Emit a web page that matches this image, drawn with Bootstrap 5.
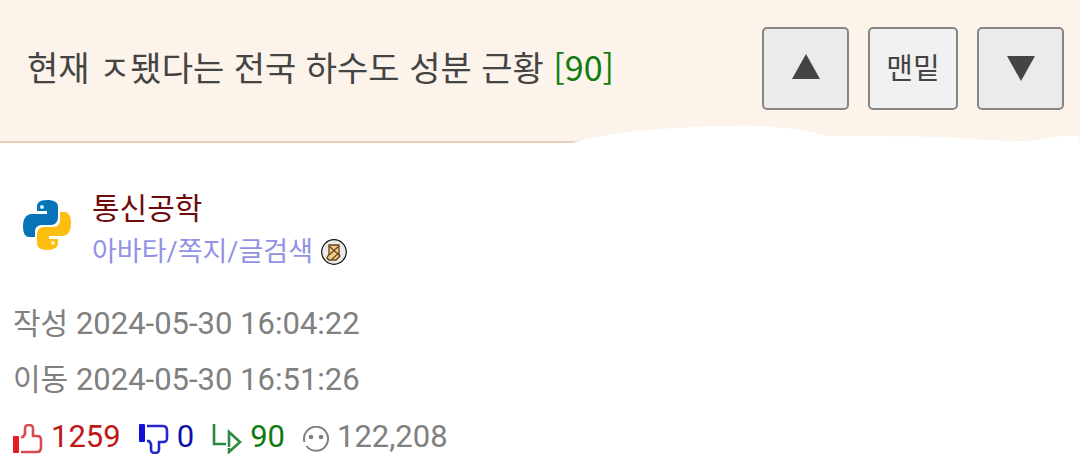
<!DOCTYPE html>
<html lang="ko">
<head>
<meta charset="utf-8">
<meta name="viewport" content="width=device-width, initial-scale=1">
<title>현재 ㅈ됐다는 전국 하수도 성분 근황</title>
<link href="https://cdn.jsdelivr.net/npm/bootstrap@5.3.0/dist/css/bootstrap.min.css" rel="stylesheet">
<style>
  body { font-family: Roboto, "Noto Sans CJK KR", sans-serif; color: #444; background: #fff; }
  .post-head { background: #fcf3ea; border-bottom: 2px solid #e8d0b8; padding: 27px 16px 31px 27px; }
  .post-title { font: 400 34px/52px "Noto Sans CJK KR", sans-serif; padding-bottom: 4px; }
  .reply-count { color: #107c10; text-decoration: none; }
  .btn-jump { --bs-btn-border-radius: 5px; --bs-btn-border-width: 2px; --bs-btn-border-color: #888682; --bs-btn-bg: #ebebeb; --bs-btn-color: #444; --bs-btn-hover-bg: #ddd; --bs-btn-hover-border-color: #777;
    width: 87px; height: 83px; padding: 0; font: 400 29px/40px "Noto Sans CJK KR", sans-serif; }
  .btn-jump svg { display: block; margin: 0 auto; }
  .btn-end { --bs-btn-bg: #f1f1f1; width: 90px; padding-bottom: 5px; }
  .jump-group { gap: 19px; }
  .paper-edge { right: 0; bottom: -2px; width: 47%; height: 18px; overflow: visible; }
  .author { padding: 44px 22px 0; gap: 20px; }
  .author-pic { margin-top: 12px; }
  .author-name { font-size: 30px; line-height: 44px; color: #6e0c0c; text-decoration: none; }
  .author-links { font-size: 27px; line-height: 42px; }
  .author-links a { color: #9292e4; text-decoration: none; }
  .meta { padding: 23px 13px 0; color: #808080; font-size: 31px; line-height: 56px; }
  .meta-label { font-size: 30px; }
  .stats { gap: 18px; padding-top: 1px; }
  .stat { gap: 8px; }
  .stat svg { margin-top: 3px; }
  .up { color: #c01818; }
  .down { color: #1010a8; }
  .reply { color: #107c10; }
</style>
</head>
<body>
<header class="post-head position-relative d-flex justify-content-between align-items-center">
  <h1 class="post-title mb-0">현재 ㅈ됐다는 전국 하수도 성분 근황 <a class="reply-count" href="#replies">[90]</a></h1>
  <div class="jump-group d-flex flex-shrink-0">
    <button type="button" class="btn btn-jump" aria-label="위로"><svg width="28" height="29" viewBox="0 0 28 29" aria-hidden="true"><path d="M14 0 28 25H0z" fill="#444"/></svg></button>
    <button type="button" class="btn btn-jump btn-end">맨밑</button>
    <button type="button" class="btn btn-jump" aria-label="아래로"><svg width="28" height="25" viewBox="0 0 28 25" aria-hidden="true"><path d="M0 0H28L14 25z" fill="#444"/></svg></button>
  </div>
  <svg class="paper-edge position-absolute" viewBox="0 0 512 18" preserveAspectRatio="none" aria-hidden="true"><path d="M0 18C18 13 38 9 62 6C95 4 120 1 158 1C200 0 228 3 257 11C320 11 370 11 405 14C425 16 445 16 460 16C475 15 480 11 497 11H512V18z" fill="#fff"/></svg>
</header>

<main>
  <section class="author d-flex align-items-start">
    <svg class="author-pic" width="50" height="52" viewBox="0 0 50 52" aria-hidden="true">
      <path d="M25 1C17 1 15 4 15 8V12H25V15H10C4 15 1 20 1 27C1 34 3 38 7 38H13V33C13 28 16 26 20 26H29C33 26 36 23 36 18V8C36 3 32 1 25 1z" fill="#0874b8"/>
      <path d="M38 13H43C47 13 49 18 49 24C49 32 46 37 40 37H27V40H36V44C36 49 31 51 25 51C18 51 15 48 15 44V35C15 31 18 28 22 28H31C36 28 38 25 38 20z" fill="#fdbf0f"/>
      <circle cx="20" cy="8" r="2" fill="#d8ecf7"/><circle cx="31" cy="44" r="2" fill="#fff0bd"/>
    </svg>
    <div>
      <div class="lh-1"><a class="author-name" href="#author">통신공학</a></div>
      <div class="author-links d-flex align-items-center gap-2">
        <span><a href="#avatar">아바타</a><a href="#note">/쪽지</a><a href="#search">/글검색</a></span>
        <svg width="26" height="26" viewBox="0 0 26 26" aria-hidden="true"><circle cx="13" cy="13" r="12.3" fill="#ebebeb" stroke="#111" stroke-width="1.2"/><path d="M8 6H18V15L19 17L15 21H8L6 19L8 15z" fill="#f5ca83" stroke="#60451f" stroke-width="1.3"/><path d="M8 7 18 16M18 7 8 16M11 20 18 14" fill="none" stroke="#60451f" stroke-width="1.2"/></svg>
      </div>
    </div>
  </section>

  <section class="meta">
    <div><span class="meta-label">작성</span> <time datetime="2024-05-30T16:04:22">2024-05-30 16:04:22</time></div>
    <div><span class="meta-label">이동</span> <time datetime="2024-05-30T16:51:26">2024-05-30 16:51:26</time></div>
    <div class="stats d-flex align-items-center">
      <span class="stat up d-flex align-items-center">
        <svg width="30" height="30" viewBox="0 0 30 30" aria-hidden="true"><path d="M1 13H5V28H1z" fill="#e61c24" stroke="#e61c24" stroke-width="2" stroke-linejoin="round"/><path d="M8 28H24C27 28 28 26 28 23V16C28 13 27 12 24 12H20V5C20 2 19 1 16 1S12 2 12 5V10L10 13H8" fill="none" stroke="#d94b50" stroke-width="2.6"/></svg>1259</span>
      <span class="stat down d-flex align-items-center">
        <svg width="30" height="30" viewBox="0 0 30 30" aria-hidden="true"><path d="M1 1H5V17H1z" fill="#1010dc" stroke="#1010dc" stroke-width="2" stroke-linejoin="round"/><path d="M8 2H24C27 2 28 4 28 7V14C28 17 27 18 24 18H20V25C20 28 19 29 16 29S12 28 12 25V20L10 17H8" fill="none" stroke="#2525cf" stroke-width="2.6"/></svg>0</span>
      <span class="stat reply d-flex align-items-center">
        <svg width="30" height="30" viewBox="0 0 30 30" aria-hidden="true"><path d="M2 0V20H14M17 23V8L28 18L17 28V24" fill="none" stroke="#2c8a40" stroke-width="2.6"/></svg>90</span>
      <span class="stat d-flex align-items-center">
        <svg width="26" height="26" viewBox="0 0 26 26" aria-hidden="true"><path d="M1.5 16A12 12 0 1 1 3.5 20" fill="none" stroke="#808080" stroke-width="2"/><circle cx="8" cy="11" r="2.3" fill="#808080"/><circle cx="18" cy="11" r="2.3" fill="#808080"/></svg>122,208</span>
    </div>
  </section>
</main>
<script src="https://cdn.jsdelivr.net/npm/bootstrap@5.3.0/dist/js/bootstrap.bundle.min.js"></script>
</body>
</html>
